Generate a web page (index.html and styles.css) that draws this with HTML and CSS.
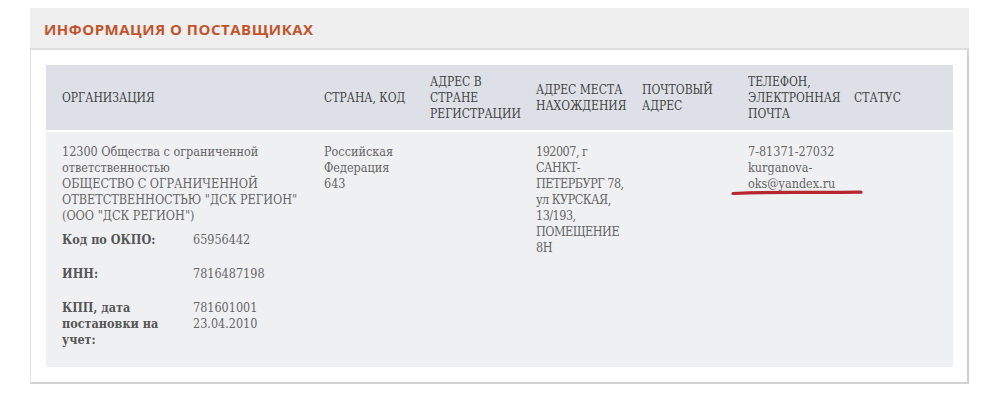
FILE: index.html
```html
<!DOCTYPE html>
<html lang="ru">
<head>
<meta charset="utf-8">
<title>Информация о поставщиках</title>
<link rel="stylesheet" href="styles.css">
</head>
<body>
<section class="card">
  <header class="card-head"><h2>Информация о поставщиках</h2></header>
  <div class="card-body">
    <table class="suppliers">
      <colgroup>
        <col class="c-org"><col class="c-mid"><col class="c-mid"><col class="c-mid"><col class="c-mid"><col class="c-mid"><col class="c-last">
      </colgroup>
      <thead>
        <tr>
          <th>Организация</th>
          <th>Страна, код</th>
          <th>Адрес в стране регистрации</th>
          <th>Адрес места нахождения</th>
          <th>Почтовый адрес</th>
          <th>Телефон, электронная почта</th>
          <th>Статус</th>
        </tr>
      </thead>
      <tbody>
        <tr>
          <td>
            <div class="org-name">12300 Общества с ограниченной ответственностью<br>ОБЩЕСТВО С ОГРАНИЧЕННОЙ ОТВЕТСТВЕННОСТЬЮ "ДСК РЕГИОН" (ООО "ДСК РЕГИОН")</div>
            <dl class="details">
              <dt>Код по ОКПО:</dt><dd>65956442</dd>
              <dt>ИНН:</dt><dd>7816487198</dd>
              <dt>КПП, дата постановки на учет:</dt><dd>781601001<br>23.04.2010</dd>
            </dl>
          </td>
          <td>Российская Федерация<br>643</td>
          <td></td>
          <td class="tight">192007, г САНКТ-ПЕТЕРБУРГ 78, ул КУРСКАЯ, 13/193, ПОМЕЩЕНИЕ 8Н</td>
          <td></td>
          <td><span class="contact">7-81371-27032<br>kurganova-oks@yandex.ru<svg class="mark" width="132" height="8" viewBox="0 0 132 8" aria-hidden="true"><path d="M2 5.5 Q40 4.2 70 4.4 T130 4.2" stroke="#b5262e" stroke-width="3.2" fill="none" stroke-linecap="round"/></svg></span></td>
          <td></td>
        </tr>
      </tbody>
    </table>
  </div>
</section>
</body>
</html>
```
FILE: styles.css
```css
html, body {
  margin: 0;
  padding: 0;
  background: #fff;
}
body {
  padding: 8px 32px 0 30px;
  font-family: "DejaVu Serif Condensed", "DejaVu Serif", "Liberation Serif", serif;
  font-stretch: semi-condensed;
}
.card {
  width: 939px;
  box-sizing: border-box;
}
.card-head {
  background: #efefef;
  height: 40px;
  border-bottom: 2px solid #dedede;
  padding: 0 14px;
  display: flex;
  align-items: center;
}
.card-head h2 {
  margin: 0;
  font-family: "Open Sans", "Liberation Sans", sans-serif;
  font-stretch: normal;
  font-weight: 700;
  font-size: 15px;
  letter-spacing: 0.5px;
  text-transform: uppercase;
  color: #c0552d;
  padding-top: 1px;
}
.card-body {
  border-left: 1px solid #e2e2e2;
  border-right: 2px solid #d2d2d2;
  border-bottom: 2px solid #d2d2d2;
  padding: 15px 14px 15px 15px;
}
.suppliers {
  width: 100%;
  table-layout: fixed;
  border-collapse: collapse;
}
.c-org { width: 262px; }
.c-mid { width: 106px; }
.c-last { width: auto; }
.suppliers th {
  background: #dde1e7;
  color: #444;
  font-size: 12px;
  font-weight: 400;
  text-transform: uppercase;
  text-align: left;
  vertical-align: middle;
  line-height: 16px;
  height: 65px;
  padding: 0 2px 0 16px;
  border-bottom: 2px solid #fff;
}
.suppliers td {
  background: #eff0f2;
  color: #666;
  font-size: 12.5px;
  line-height: 16px;
  vertical-align: top;
  padding: 12px 2px 19px 16px;
  overflow-wrap: break-word;
}
.suppliers td.tight {
  padding-right: 0;
  letter-spacing: -0.5px;
}
.org-name {
  padding-right: 6px;
}
.details {
  display: grid;
  grid-template-columns: 131px 1fr;
  row-gap: 18px;
  margin: 8px 0 0;
}
.details dt {
  font-weight: 700;
  color: #555;
  padding-right: 26px;
}
.details dd {
  margin: 0;
}
.contact {
  position: relative;
  display: inline-block;
}
.mark {
  position: absolute;
  left: -17px;
  top: 44px;
}
```
